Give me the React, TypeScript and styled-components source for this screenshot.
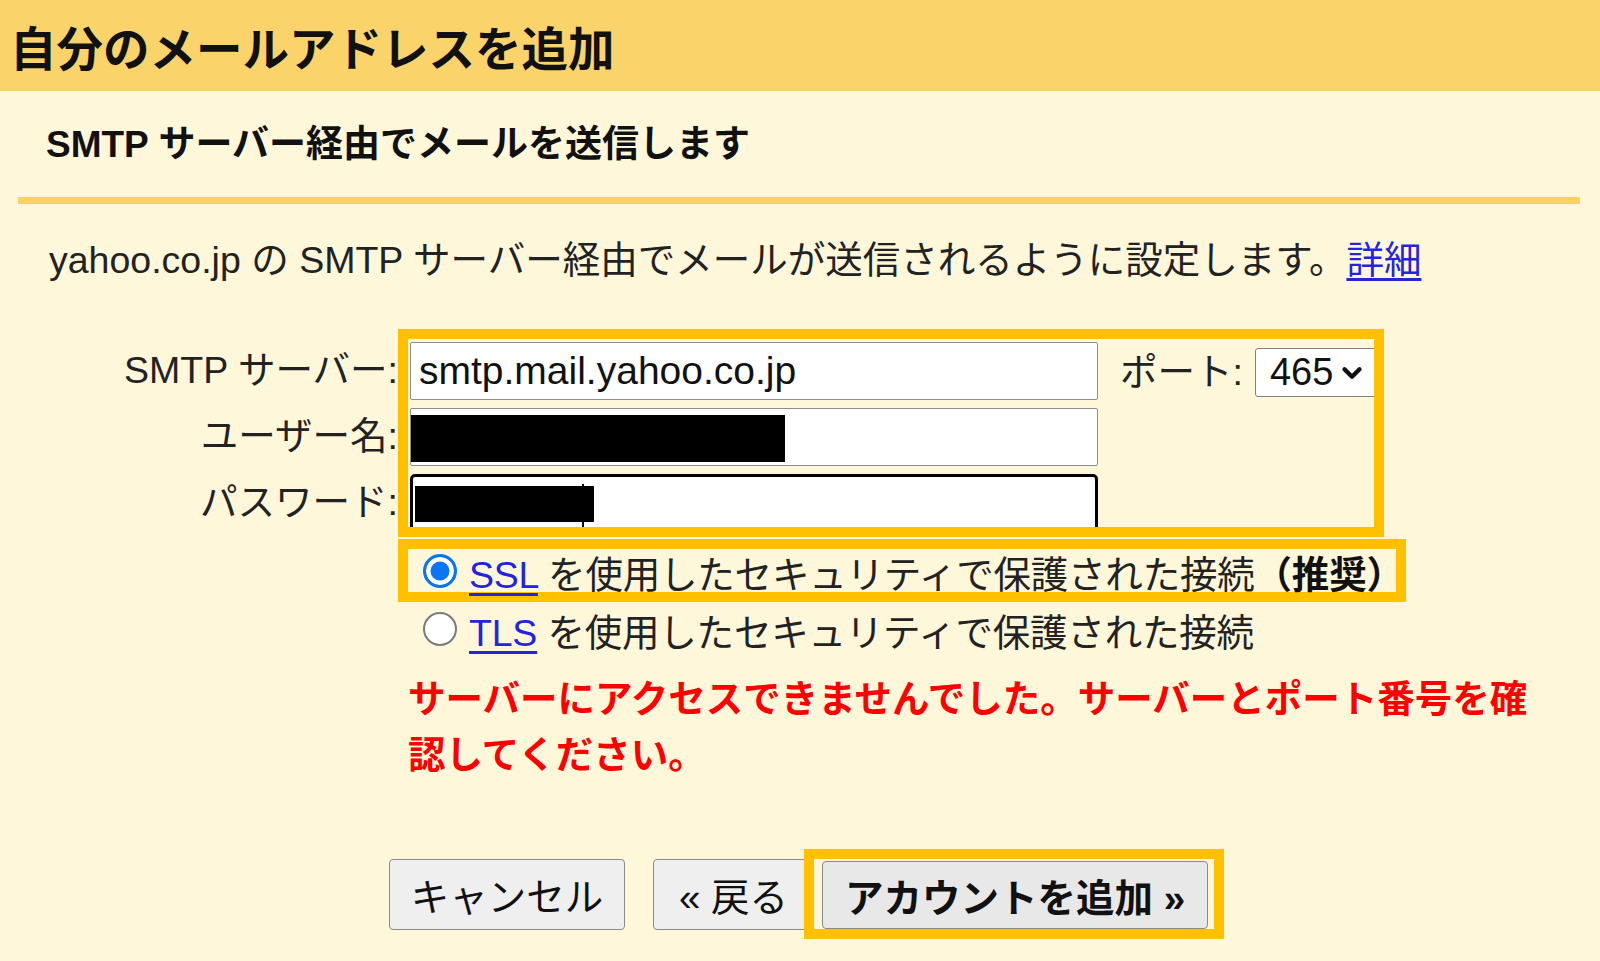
import React from "react";
import styled, { createGlobalStyle } from "styled-components";
import { ChevronDown } from "lucide-react";

const GlobalStyle = createGlobalStyle`
  html, body {
    margin: 0;
    padding: 0;
    background: #fff7da;
  }
  body {
    font-family: "Liberation Sans", "Noto Sans CJK JP", sans-serif;
    color: #111;
  }
`;

const Page = styled.div`
  width: 1600px;
  min-height: 961px;
  background: #fff7da;
  overflow: hidden;
`;

const Header = styled.div`
  height: 91px;
  box-sizing: border-box;
  padding: 9px 0 0 10px;
  display: flex;
  align-items: center;
  background: #fad36a;
`;

const Title = styled.h1`
  margin: 0;
  font-size: 46.5px;
  font-weight: 700;
  line-height: 52px;
  color: #111;
`;

const Subtitle = styled.h2`
  margin: 33px 0 0;
  padding-left: 46px;
  font-size: 37px;
  font-weight: 700;
  line-height: 42px;
`;

const Divider = styled.div`
  margin: 31px 0 0 18px;
  width: 1562px;
  height: 7px;
  background: #fbd160;
`;

const Description = styled.p`
  margin: 33px 0 0;
  padding-left: 49px;
  font-size: 37.5px;
  line-height: 46px;
  color: #222;
`;

const Link = styled.a`
  color: #2424e0;
  text-decoration: underline;
  text-underline-offset: 5px;
  cursor: pointer;
`;

const Form = styled.div`
  margin-top: 46px;
  display: grid;
  grid-template-columns: 398px auto;
  justify-content: start;
`;

const Labels = styled.div`
  grid-column: 1;
  padding-top: 8px;
  display: flex;
  flex-direction: column;
  gap: 8px;
`;

const Label = styled.div`
  height: 58px;
  display: flex;
  align-items: center;
  justify-content: flex-end;
  font-size: 37.5px;
  color: #222;
  white-space: nowrap;
`;

const Highlight = styled.div<{ $width: number }>`
  grid-column: 2;
  width: ${(p) => p.$width}px;
  box-sizing: border-box;
  border: 10px solid #ffc000;
`;

const ServerBox = styled(Highlight)`
  height: 208px;
  padding: 3px 0 0 2px;
  display: flex;
  align-items: flex-start;
  overflow: hidden;
`;

const Fields = styled.div`
  width: 688px;
  flex-shrink: 0;
  display: flex;
  flex-direction: column;
  gap: 8px;
`;

const Field = styled.div<{ $focused?: boolean }>`
  position: relative;
  height: 58px;
  box-sizing: border-box;
  background: #fff;
  border: ${(p) => (p.$focused ? "3px solid #000" : "1.5px solid #8d8d8d")};
  border-radius: ${(p) => (p.$focused ? "5px" : "2px")};
  display: flex;
  align-items: center;
  padding-left: 8px;
  font-size: 39px;
  color: #111;
  white-space: nowrap;
`;

const Redact = styled.div<{ $w: number; $h: number; $top: number; $left: number }>`
  position: absolute;
  top: ${(p) => p.$top}px;
  left: ${(p) => p.$left}px;
  width: ${(p) => p.$w}px;
  height: ${(p) => p.$h}px;
  background: #000;
`;

const Caret = styled.div`
  position: absolute;
  top: 7px;
  left: 169px;
  width: 2px;
  height: 43px;
  background: #000;
`;

const PortLabel = styled.div`
  margin: 2px 0 0 22px;
  height: 49px;
  display: flex;
  align-items: center;
  font-size: 37.5px;
  color: #222;
  white-space: nowrap;
`;

const Select = styled.div`
  margin: 6px 0 0 12px;
  width: 130px;
  height: 49px;
  flex-shrink: 0;
  box-sizing: border-box;
  background: #fff;
  border: 1.5px solid #808080;
  border-radius: 3px;
  display: flex;
  align-items: center;
  gap: 4px;
  padding-left: 14px;
  font-size: 38px;
  color: #111;
`;

const SslBox = styled(Highlight)`
  margin-top: 2px;
  height: 63px;
  padding-left: 15px;
  display: flex;
  align-items: center;
`;

const OptionRow = styled.div`
  grid-column: 2;
  height: 54px;
  padding-left: 25px;
  display: flex;
  align-items: center;
`;

const Radio = styled.span<{ $checked?: boolean }>`
  width: 34px;
  height: 34px;
  flex-shrink: 0;
  box-sizing: border-box;
  border-radius: 50%;
  ${(p) =>
    p.$checked
      ? `
    border: 3.5px solid #0a76f6;
    background: #0a76f6;
    box-shadow: inset 0 0 0 4.5px #fff;
  `
      : `
    border: 2.5px solid #7a7a7a;
    background: #fff;
  `}
`;

const OptionText = styled.span`
  margin: 8px 0 0 12px;
  font-size: 37.5px;
  line-height: 44px;
  letter-spacing: -0.2px;
  color: #222;
  white-space: nowrap;
`;

const Strong = styled.b`
  font-weight: 700;
  color: #111;
`;

const ErrorText = styled.div`
  grid-column: 2;
  margin-top: 15px;
  padding-left: 10px;
  width: 1140px;
  font-size: 37.5px;
  line-height: 56px;
  font-weight: 700;
  color: #ff0000;
`;

const Buttons = styled.div`
  margin-top: 66px;
  padding-left: 389px;
  display: flex;
  align-items: center;
`;

const Button = styled.button<{ $width: number; $primary?: boolean }>`
  width: ${(p) => p.$width}px;
  height: ${(p) => (p.$primary ? 68 : 71)}px;
  box-sizing: border-box;
  padding: 0;
  background: ${(p) => (p.$primary ? "#e8e8e8" : "#efefef")};
  border: 1.5px solid #8a8a8a;
  border-radius: 4px;
  font-family: "Liberation Sans", "Noto Sans CJK JP", sans-serif;
  font-size: 38.5px;
  font-weight: ${(p) => (p.$primary ? 700 : 400)};
  color: #111;
  cursor: pointer;
  & + & {
    margin-left: 28px;
  }
`;

const ButtonHighlight = styled.div`
  position: relative;
  margin-left: -10px;
  padding: 2px 6px 0 8px;
  border: 10px solid #ffc000;
  display: flex;
`;

export default function App() {
  return (
    <>
      <GlobalStyle />
      <Page>
        <Header>
          <Title>自分のメールアドレスを追加</Title>
        </Header>
        <Subtitle>SMTP サーバー経由でメールを送信します</Subtitle>
        <Divider />
        <Description>
          yahoo.co.jp の SMTP サーバー経由でメールが送信されるように設定します。<Link>詳細</Link>
        </Description>

        <Form>
          <Labels>
            <Label>SMTP サーバー:</Label>
            <Label>ユーザー名:</Label>
            <Label>パスワード:</Label>
          </Labels>
          <ServerBox $width={986}>
            <Fields>
              <Field>smtp.mail.yahoo.co.jp</Field>
              <Field>
                <Redact $top={6} $left={0} $w={374} $h={47} />
              </Field>
              <Field $focused>
                <Redact $top={9} $left={2} $w={179} $h={36} />
                <Caret />
              </Field>
            </Fields>
            <PortLabel>ポート:</PortLabel>
            <Select>
              465
              <ChevronDown size={30} strokeWidth={3.5} color="#111" />
            </Select>
          </ServerBox>

          <SslBox $width={1008}>
            <Radio $checked />
            <OptionText>
              <Link>SSL</Link> を使用したセキュリティで保護された接続<Strong>（推奨）</Strong>
            </OptionText>
          </SslBox>
          <OptionRow>
            <Radio />
            <OptionText>
              <Link>TLS</Link> を使用したセキュリティで保護された接続
            </OptionText>
          </OptionRow>
          <ErrorText>
            サーバーにアクセスできませんでした。サーバーとポート番号を確認してください。
          </ErrorText>
        </Form>

        <Buttons>
          <Button $width={236}>キャンセル</Button>
          <Button $width={161}>« 戻る</Button>
          <ButtonHighlight>
            <Button $width={386} $primary>
              アカウントを追加 »
            </Button>
          </ButtonHighlight>
        </Buttons>
      </Page>
    </>
  );
}
